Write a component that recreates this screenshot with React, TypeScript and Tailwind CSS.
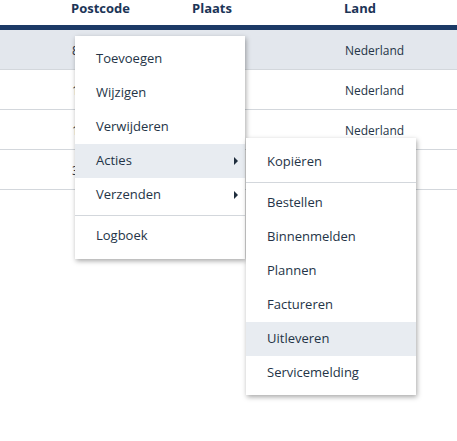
import React from 'react';

const rows = [
  { postcode: '8011 AB', plaats: 'Zwolle', land: 'Nederland' },
  { postcode: '1135 AA', plaats: 'Edam', land: 'Nederland' },
  { postcode: '1621 CZ', plaats: 'Hoorn', land: 'Nederland' },
  { postcode: '3011 AD', plaats: 'Gouda', land: 'Nederland' },
];

const Arrow = () => (
  <span className="ml-auto mr-[7px] h-0 w-0 border-y-[4px] border-l-[4px] border-y-transparent border-l-[#1f2d3d]"></span>
);

interface ItemProps {
  label: string;
  active?: boolean;
  sub?: boolean;
}

const Item: React.FC<ItemProps> = ({ label, active, sub }) => (
  <div
    className={`flex h-[34px] items-center pl-[21px] text-[13px] text-[#243447] ${
      active ? 'bg-[#e8ecf1]' : ''
    }`}
  >
    <span>{label}</span>
    {sub && <Arrow />}
  </div>
);

const Divider = () => <div className="my-[3px] h-px bg-[#d3d7dc]"></div>;

export default function App() {
  return (
    <div
      className="relative h-[441px] w-[457px] overflow-hidden bg-white"
      style={{ fontFamily: '"Open Sans", "Liberation Sans", sans-serif' }}
    >
      {/* Table */}
      <div className="w-full">
        <div className="grid h-[25px] grid-cols-[121px_152px_1fr] pl-[71px] text-[13px] font-bold leading-[17px] text-[#1c3557]">
          <div>Postcode</div>
          <div>Plaats</div>
          <div>Land</div>
        </div>
        <div className="h-[5px] bg-[#1c3a66]"></div>
        {rows.map((r, i) => (
          <div
            key={i}
            className={`grid h-[40px] grid-cols-[121px_152px_1fr] items-center border-b border-[#d3d7dc] pl-[72px] pt-[2px] text-[12px] text-[#243447] ${
              i === 0 ? 'bg-[#e3e7ed]' : ''
            }`}
          >
            <div>{r.postcode}</div>
            <div>{r.plaats}</div>
            <div>{r.land}</div>
          </div>
        ))}
      </div>

      {/* Context menu */}
      <div className="absolute left-[75px] top-[36px] w-[170px] bg-white py-[6px] shadow-[1px_2px_5px_rgba(0,0,0,0.35)]">
        <Item label="Toevoegen" />
        <Item label="Wijzigen" />
        <Item label="Verwijderen" />
        <Item label="Acties" active sub />
        <Item label="Verzenden" sub />
        <Divider />
        <Item label="Logboek" />
      </div>

      {/* Submenu */}
      <div className="absolute left-[246px] top-[138px] w-[170px] bg-white pb-[5px] pt-[7px] shadow-[1px_2px_5px_rgba(0,0,0,0.35)]">
        <Item label="Kopiëren" />
        <Divider />
        <Item label="Bestellen" />
        <Item label="Binnenmelden" />
        <Item label="Plannen" />
        <Item label="Factureren" />
        <Item label="Uitleveren" active />
        <Item label="Servicemelding" />
      </div>
    </div>
  );
}
